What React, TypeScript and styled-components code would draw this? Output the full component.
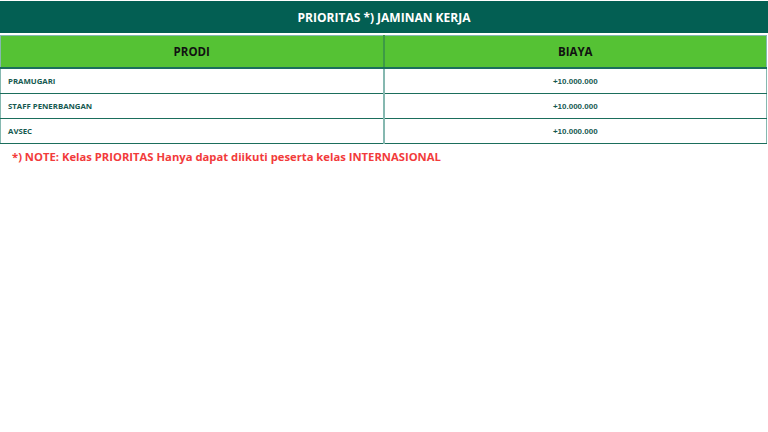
import styled, { createGlobalStyle } from 'styled-components'

const GlobalStyle = createGlobalStyle`
  html, body {
    margin: 0;
    padding: 0;
    background: #ffffff;
    font-family: "Open Sans", "Liberation Sans", sans-serif;
  }
`

const Page = styled.div`
  width: 768px;
  padding-top: 1px;
`

const TitleBar = styled.div`
  background-color: #035f53;
  color: #ffffff;
  height: 32px;
  display: flex;
  align-items: center;
  justify-content: center;
  font-size: 12px;
  font-weight: 700;
  border-bottom: 2px solid #ffffff;
`

const Table = styled.table`
  width: 767px;
  table-layout: fixed;
  border-collapse: collapse;
  border: 1px solid #86b8b0;
`

const HeadCell = styled.th`
  width: 50%;
  background-color: #55c234;
  color: #111111;
  font-size: 11.5px;
  font-weight: 700;
  height: 31px;
  padding: 0;
  text-align: center;
  border-left: 2px solid #3d9a45;
  border-bottom: 2px solid #1b6e5c;

  &:first-child {
    border-left: none;
  }
`

const Cell = styled.td<{ $center?: boolean }>`
  height: 24px;
  padding: 0 0 0 ${p => (p.$center ? '0' : '7px')};
  text-align: ${p => (p.$center ? 'center' : 'left')};
  color: #15594f;
  font-size: ${p => (p.$center ? '8px' : '7.8px')};
  font-weight: 700;
  font-family: ${p => (p.$center ? '"Liberation Sans", Arial, sans-serif' : '"Open Sans", sans-serif')};
  border-bottom: 1px solid #1b6e5c;
  border-left: 2px solid #86b8b0;

  &:first-child {
    border-left: none;
  }
`

const Note = styled.p`
  margin: 5px 0 0 12px;
  color: #f23b3b;
  font-size: 11.25px;
  font-weight: 700;
`

const rows = ['PRAMUGARI', 'STAFF PENERBANGAN', 'AVSEC']

export default function App() {
  return (
    <>
      <GlobalStyle />
      <Page>
        <TitleBar>PRIORITAS *) JAMINAN KERJA</TitleBar>
        <Table>
          <thead>
            <tr>
              <HeadCell>PRODI</HeadCell>
              <HeadCell>BIAYA</HeadCell>
            </tr>
          </thead>
          <tbody>
            {rows.map(r => (
              <tr key={r}>
                <Cell>{r}</Cell>
                <Cell $center>+10.000.000</Cell>
              </tr>
            ))}
          </tbody>
        </Table>
        <Note>*) NOTE: Kelas PRIORITAS Hanya dapat diikuti peserta kelas INTERNASIONAL</Note>
      </Page>
    </>
  )
}
